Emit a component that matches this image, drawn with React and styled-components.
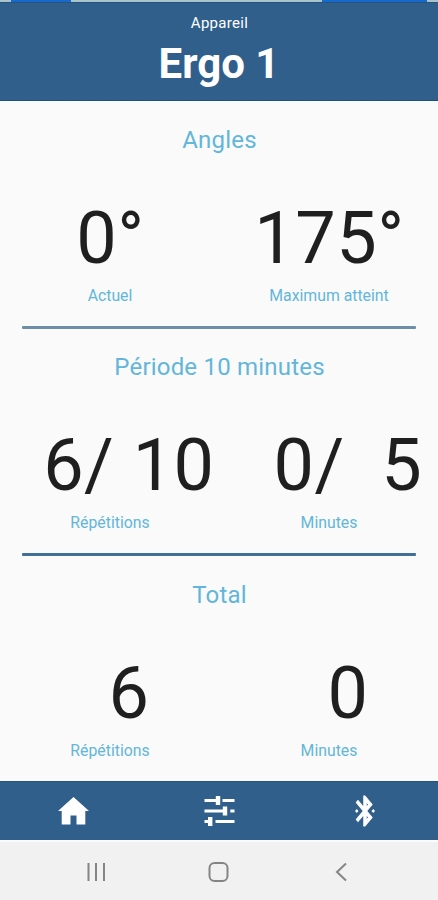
import React from 'react';
import styled, { createGlobalStyle } from 'styled-components';

const colors = {
  primary: '#305f8b',
  accent: '#63b6d9',
  text: '#1f1f1f',
  background: '#fafafa',
};

const GlobalStyle = createGlobalStyle`
  * {
    box-sizing: border-box;
  }

  body {
    margin: 0;
    font-family: Roboto, 'Liberation Sans', sans-serif;
    background: ${colors.background};
  }
`;

const Screen = styled.div`
  display: flex;
  flex-direction: column;
  width: 438px;
  height: 900px;
  overflow: hidden;
`;

const StatusStrip = styled.div`
  height: 2px;
  flex: none;
  background: linear-gradient(
    to right,
    #a9c4cb 11px,
    #1769cb 11px 71px,
    #a9c4cb 71px 322px,
    #1769cb 322px 427px,
    #a9c4cb 427px
  );
`;

const Header = styled.header`
  display: flex;
  flex-direction: column;
  align-items: center;
  flex: none;
  height: 99px;
  padding-top: 11px;
  color: #fff;
  background: ${colors.primary};
  border-top: 1px solid #245480;
  border-bottom: 1px solid #1d4f7c;
`;

const Caption = styled.span`
  padding-left: 1px;
  font-size: 15px;
  line-height: 18px;
  letter-spacing: 0.3px;
`;

const Title = styled.h1`
  margin: 7px 0 0;
  font-size: 42px;
  font-weight: 700;
  line-height: 50px;
`;

const Content = styled.main`
  flex: none;
  height: 680px;
  padding-top: 1px;
`;

const Section = styled.section`
  height: 227.3px;
`;

const SectionTitle = styled.h2`
  margin: 0;
  padding: 23px 0 0 1px;
  font-size: 24px;
  font-weight: 400;
  line-height: 30px;
  letter-spacing: 0.2px;
  text-align: center;
  color: ${colors.accent};
`;

const Metrics = styled.div`
  display: grid;
  grid-template-columns: 219px 219px;
  padding-top: 42px;
`;

const Metric = styled.div`
  display: flex;
  flex-direction: column;
  align-items: center;
`;

const Value = styled.span`
  padding-left: 2px;
  font-size: 72px;
  line-height: 84px;
  letter-spacing: 0.5px;
  white-space: pre;
  color: ${colors.text};
`;

const Label = styled.span`
  margin-top: 4px;
  padding-left: 1px;
  font-size: 15.8px;
  line-height: 21px;
  color: ${colors.accent};
`;

const Divider = styled.div`
  height: 3px;
  margin: 20px 22px 0;
  border-radius: 1px;
  background: ${(props) => props.color};
`;

const TabBar = styled.nav`
  display: grid;
  grid-template-columns: repeat(3, 1fr);
  place-items: center;
  flex: none;
  height: 59px;
  background: ${colors.primary};
  border-top: 1px solid #245480;
`;

const Tab = styled.a`
  display: flex;
  color: #fff;
`;

const SystemBar = styled.div`
  display: flex;
  justify-content: space-between;
  align-items: center;
  flex: 1;
  padding: 1px 85px 0 84px;
  color: #858585;
  background: #f1f1f1;
  border-top: 2px solid #fbfbfb;
`;

const MetricItem = ({ value, label }) => (
  <Metric>
    <Value>{value}</Value>
    <Label>{label}</Label>
  </Metric>
);

// counters are padded to a fixed number of characters
const sections = [
  {
    title: 'Angles',
    divider: '#6b8fa9',
    metrics: [
      { value: '0°', label: 'Actuel' },
      { value: '175°', label: 'Maximum atteint' },
    ],
  },
  {
    title: 'Période 10 minutes',
    divider: '#426f98',
    metrics: [
      { value: '  6/ 10', label: 'Répétitions' },
      { value: '  0/  5', label: 'Minutes' },
    ],
  },
  {
    title: 'Total',
    metrics: [
      { value: '  6', label: 'Répétitions' },
      { value: '  0', label: 'Minutes' },
    ],
  },
];

const HomeIcon = () => (
  <svg width="34" height="30" fill="currentColor">
    <path d="M17.500 1L2 15h3.700v13.500h8.800v-9h6v9h8.800V15H33z" />
  </svg>
);

const SlidersIcon = () => (
  <svg width="32" height="32" fill="none" stroke="currentColor">
    <path strokeWidth="3" d="M1.500 5.500H13M19.500 5.500h12M1.500 16H20M27.300 16h4.200M1.500 26.500H5M12.500 26.500h19" />
    <path strokeWidth="4.400" d="M15 1v9M22 11.500v9M7.200 22v9" />
  </svg>
);

const BluetoothIcon = () => (
  <svg width="30" height="36" viewBox="0 0 24 24" preserveAspectRatio="none" fill="currentColor">
    <path d="M17.710 7.710L12 2h-1v7.590L6.410 5 5 6.410 10.590 12 5 17.590 6.410 19 11 14.410V22h1l5.710-5.710-4.300-4.290 4.300-4.290zM13 5.830l1.880 1.880L13 9.590V5.830zm1.880 10.460L13 18.170v-3.760l1.880 1.880z" stroke="currentColor" strokeWidth="0.700" />
    <path d="M5.400 10.600L4 12l1.400 1.400L6.800 12zM18.600 10.600L17.200 12l1.400 1.400L20 12z" />
  </svg>
);

const App = () => (
  <>
    <GlobalStyle />
    <Screen>
      <StatusStrip />
      <Header>
        <Caption>Appareil</Caption>
        <Title>Ergo 1</Title>
      </Header>
      <Content>
        {sections.map((section) => (
          <Section key={section.title}>
            <SectionTitle>{section.title}</SectionTitle>
            <Metrics>
              {section.metrics.map((metric) => (
                <MetricItem key={metric.label} {...metric} />
              ))}
            </Metrics>
            {section.divider && <Divider color={section.divider} />}
          </Section>
        ))}
      </Content>
      <TabBar>
        <Tab>
          <HomeIcon />
        </Tab>
        <Tab>
          <SlidersIcon />
        </Tab>
        <Tab>
          <BluetoothIcon />
        </Tab>
      </TabBar>
      <SystemBar>
        <svg width="24" height="24" fill="none" stroke="currentColor" strokeWidth="2">
          <path d="M4.500 3v18M12 3v18M20 3v18" />
        </svg>
        <svg width="24" height="24" fill="none" stroke="currentColor" strokeWidth="2">
          <rect x="2.500" y="3" width="18" height="18" rx="5" />
        </svg>
        <svg width="24" height="24" fill="none" stroke="currentColor" strokeWidth="2">
          <path d="M17 3.500l-9 8.500 9 8.500" />
        </svg>
      </SystemBar>
    </Screen>
  </>
);

export default App;
